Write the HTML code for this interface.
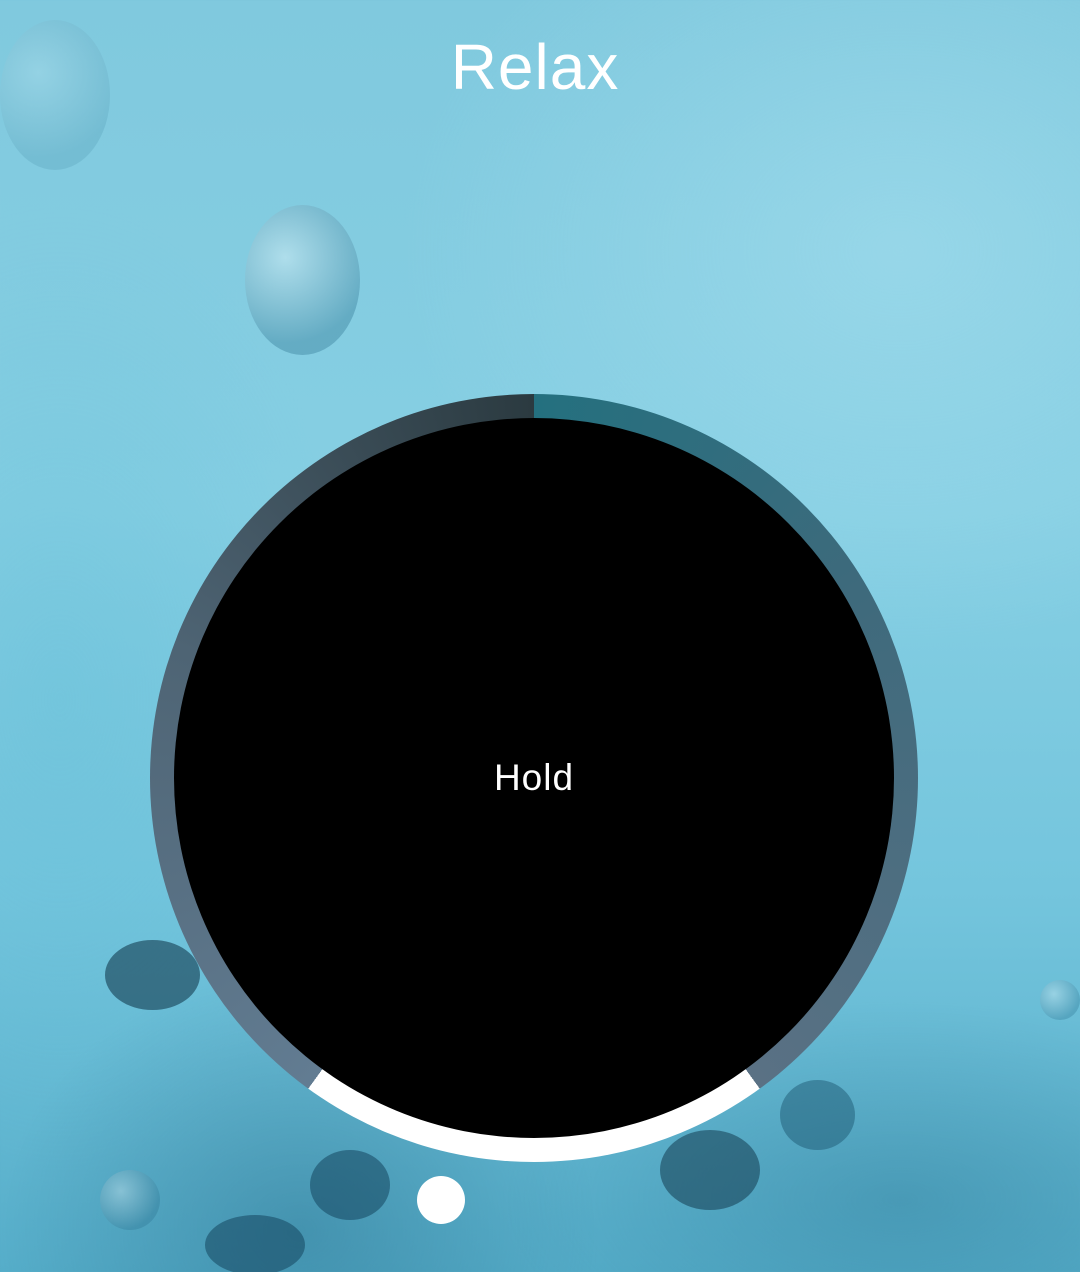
<!DOCTYPE html>
<html><head><style>
html,body{margin:0;padding:0;width:1080px;height:1272px;overflow:hidden}
body{position:relative;font-family:"Liberation Sans",sans-serif;
background:
radial-gradient(ellipse 300px 260px at 300px 1230px,rgba(20,80,110,.3),transparent),
radial-gradient(ellipse 400px 200px at 900px 1200px,rgba(30,100,130,.3),transparent),
radial-gradient(ellipse 500px 400px at 900px 250px,rgba(170,225,240,.5),transparent),
radial-gradient(ellipse 300px 500px at 60px 700px,rgba(100,190,215,.4),transparent),
linear-gradient(180deg,#80c9de 0%,#86cfe3 40%,#74c5dd 70%,#55adc9 100%);}
.b{position:absolute;border-radius:50%;background:radial-gradient(circle at 35% 35%,rgba(255,255,255,.5),rgba(40,110,140,.5) 70%)}
.ring{position:absolute;left:150px;top:394px;width:768px;height:768px;border-radius:50%;
background:conic-gradient(#24707f 0deg,#3e6a7c 60deg,#5a7184 144deg,#fff 144deg,#fff 216deg,#627c92 216deg,#4e6474 290deg,#2b3a40 360deg)}
.inner{position:absolute;left:24px;top:24px;width:720px;height:720px;border-radius:50%;background:#000;
display:flex;align-items:center;justify-content:center;color:#fff;font-size:37px;letter-spacing:1px}
h1{position:absolute;top:30px;left:0;width:1070px;text-align:center;margin:0;color:#fff;font-weight:normal;font-size:64px;letter-spacing:1px}
.dot{position:absolute;left:417px;top:1176px;width:48px;height:48px;border-radius:50%;background:#fff}
</style></head><body>
<div class="b" style="left:245px;top:205px;width:115px;height:150px;opacity:.7"></div>
<div class="b" style="left:0;top:20px;width:110px;height:150px;opacity:.3"></div>
<div class="b" style="left:105px;top:940px;width:95px;height:70px;background:rgba(20,60,80,.6)"></div>
<div class="b" style="left:310px;top:1150px;width:80px;height:70px;background:rgba(20,70,95,.55)"></div>
<div class="b" style="left:205px;top:1215px;width:100px;height:60px;background:rgba(20,70,95,.55)"></div>
<div class="b" style="left:780px;top:1080px;width:75px;height:70px;background:rgba(30,90,115,.5)"></div>
<div class="b" style="left:660px;top:1130px;width:100px;height:80px;background:rgba(20,60,80,.55)"></div>
<div class="b" style="left:100px;top:1170px;width:60px;height:60px;opacity:.6"></div>
<div class="b" style="left:1040px;top:980px;width:40px;height:40px;opacity:.6"></div>
<h1>Relax</h1>
<div class="ring"><div class="inner">Hold</div></div>
<div class="dot"></div>
</body></html>
